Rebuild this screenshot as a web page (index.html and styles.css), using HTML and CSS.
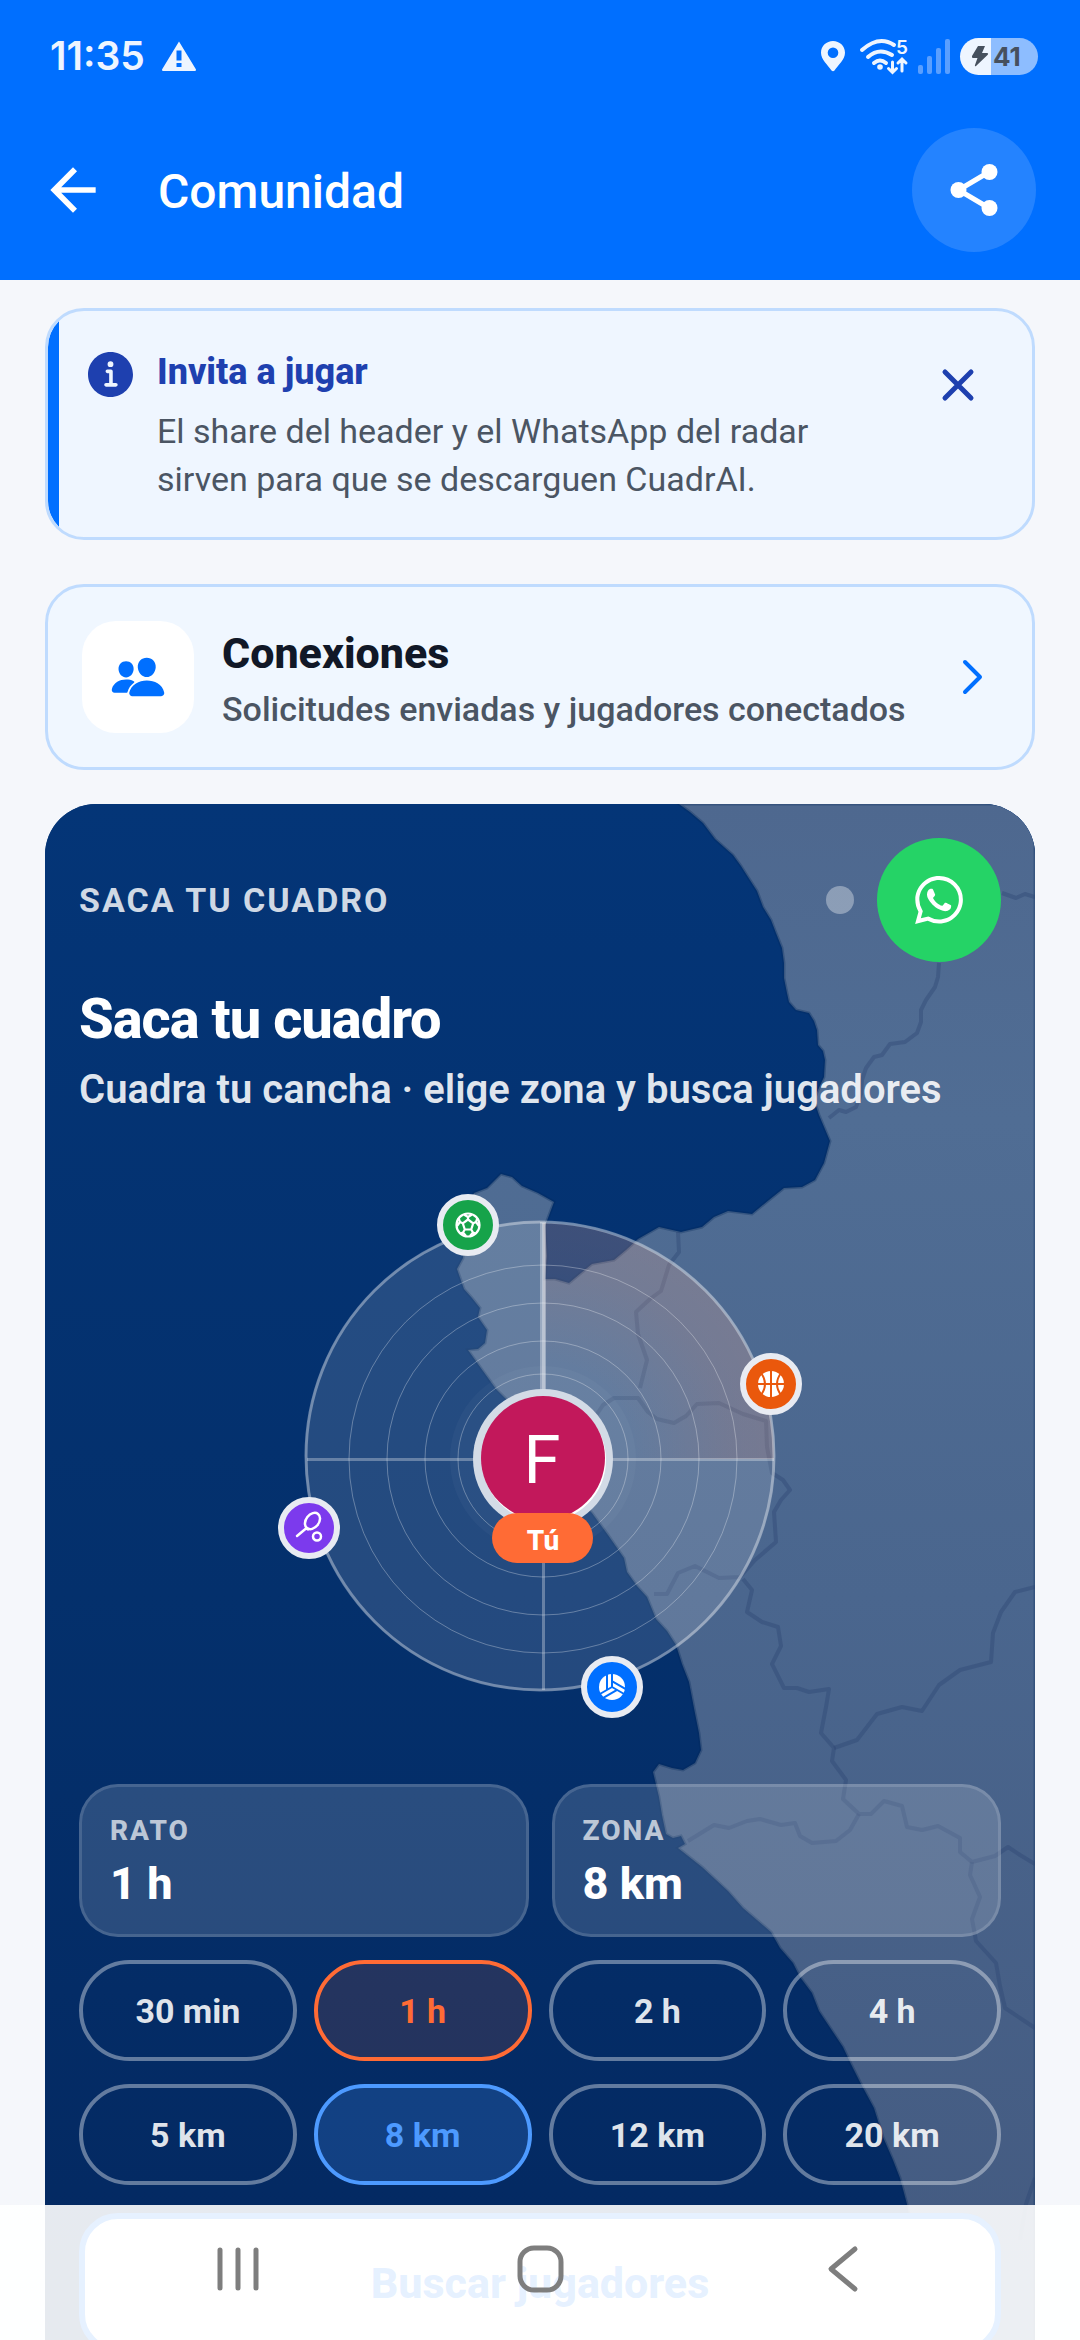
FILE: index.html
```html
<!DOCTYPE html>
<html lang="es">
<head>
<meta charset="utf-8">
<meta name="viewport" content="width=device-width, initial-scale=1">
<title>Comunidad</title>
<link rel="stylesheet" href="styles.css">
</head>
<body>
<div class="app">
  <header class="header">
    <div class="status">
      <span class="clock">11:35</span>
      <svg class="status-warning" width="36" height="32" viewBox="0 0 36 32"><path fill="#eef5ff" fill-rule="evenodd" d="M18 1.500 35 29.500Q35 31 34 31H2Q1 31 1 29.500ZM15.500 10.500V20.500H20.500V10.500ZM15.500 23V27H20.500V23Z"/></svg>
      <div class="status-right">
        <svg class="status-pin" width="24" height="32" viewBox="0 0 24 32"><path fill="#eef5ff" fill-rule="evenodd" d="M12 1C5.500 1 0 6 0 12.800 0 20 7 25 10.500 30.500Q12 32 13.500 30.500C17 25 24 20 24 12.800 24 6 18.500 1 12 1ZM12 7.500A5.300 5.300 0 1 1 12 18.100 5.300 5.300 0 0 1 12 7.500Z"/></svg>
        <svg class="status-wifi" width="48" height="36" viewBox="0 0 48 36" fill="none" stroke="#eef5ff" stroke-linecap="round">
          <path stroke-width="4" d="M2 12Q19-3 34 7M8 19Q19 9 32 17M14 25Q20 20 26 25"/>
          <circle cx="20" cy="29" r="2.800" fill="#eef5ff" stroke="none"/>
          <path stroke-width="3" d="M32.500 24V34M28.500 30.500 32.500 34.500 36.500 30.500M42 33V22M38 25 42 21 46 25"/>
          <text x="36" y="16" font-size="19" font-weight="600" fill="#eef5ff" stroke="none">5</text>
        </svg>
        <svg width="32" height="36" viewBox="0 0 32 36" fill="#5a9fff"><rect y="27" width="5" height="9" rx="2"/><rect x="9" y="18" width="5" height="18" rx="2"/><rect x="18" y="10" width="5" height="26" rx="2"/><rect x="27" y="1" width="5" height="35" rx="2"/></svg>
        <span class="battery">
          <svg width="18" height="22" viewBox="0 0 18 22"><path fill="#46505e" d="M7 1H14L11 8H16Q18 8.500 16.500 10L5 21Q3.500 22 4 20L6.500 13H2Q.500 13 1 11Z"/></svg>
          <span>41</span>
        </span>
      </div>
    </div>
    <div class="app-bar">
      <button class="back" aria-label="Volver"><svg width="68" height="68" viewBox="0 0 24 24"><path fill="#fff" d="M20 11H7.830l5.590-5.590L12 4l-8 8 8 8 1.410-1.410L7.830 13H20z"/></svg></button>
      <h1>Comunidad</h1>
      <button class="share" aria-label="Compartir"><svg width="60" height="60" viewBox="0 0 60 60" fill="#fff"><path d="M45 12 14.500 30 45 48" fill="none" stroke="#fff" stroke-width="5"/><circle cx="14.500" cy="30" r="8"/><circle cx="45.500" cy="12" r="8"/><circle cx="45.500" cy="48" r="8"/></svg></button>
    </div>
  </header>

  <main class="content">
    <section class="notice">
      <svg class="notice-icon" width="45" height="45" viewBox="56 56 400 400"><path fill="#1e40af" d="M256 56C145.720 56 56 145.720 56 256s89.720 200 200 200 200-89.720 200-200S366.280 56 256 56zm0 82a26 26 0 11-26 26 26 26 0 0126-26zm48 226h-88a16 16 0 010-32h28v-88h-16a16 16 0 010-32h32a16 16 0 0116 16v104h28a16 16 0 010 32z"/></svg>
      <div class="notice-text">
        <h2>Invita a jugar</h2>
        <p>El share del header y el WhatsApp del radar sirven para que se descarguen CuadrAI.</p>
      </div>
      <button class="close" aria-label="Cerrar"><svg width="34" height="34" viewBox="0 0 34 34"><path d="M4 4 30 30M30 4 4 30" stroke="#1e40af" stroke-width="5" stroke-linecap="round"/></svg></button>
    </section>

    <a class="connections" href="#conexiones">
      <span class="connections-icon"><svg width="56" height="56" viewBox="0 0 512 512" fill="#006fff"><path d="M336 256c-20.560 0-40.440-9.180-56-25.840-15.130-16.250-24.370-37.920-26-61-1.740-24.620 5.770-47.260 21.140-63.760S312 80 336 80c23.830 0 45.380 9.060 60.700 25.520 15.470 16.620 23 39.220 21.260 63.630-1.670 23.110-10.900 44.770-26 61C376.440 246.820 356.570 256 336 256zM467.830 432H204.180a27.710 27.710 0 01-22-10.670 30.220 30.220 0 01-5.260-25.790c8.420-33.810 29.280-61.850 60.320-81.080C264.790 297.400 299.860 288 336 288c36.850 0 71 9 98.710 26.050 31.110 19.130 52 47.330 60.380 81.550a30.270 30.270 0 01-5.320 25.780A27.680 27.680 0 01467.830 432zM147 260c-35.190 0-66.130-32.720-69-72.930-1.420-20.600 5-39.650 18-53.620 12.860-13.830 31-21.450 51-21.450s38 7.660 50.930 21.570c13.100 14.080 19.500 33.090 18 53.520-2.870 40.200-33.800 72.910-68.930 72.910zM212.660 291.450c-17.590-8.600-40.420-12.900-65.650-12.900-29.460 0-58.070 7.680-80.570 21.620-25.510 15.830-42.670 38.880-49.600 66.710a27.390 27.390 0 004.790 23.360A25.320 25.320 0 0041.720 400h111a8 8 0 007.870-6.570c.110-.630.250-1.260.410-1.880 8.480-34.060 28.350-62.840 57.710-83.820a8 8 0 00-.630-13.390c-1.570-.920-3.370-1.890-5.420-2.890z"/></svg></span>
      <span class="connections-text">
        <strong>Conexiones</strong>
        <span>Solicitudes enviadas y jugadores conectados</span>
      </span>
      <svg class="chevron" width="24" height="38" viewBox="0 0 24 38"><path d="M4 4 19 19 4 34" fill="none" stroke="#006fff" stroke-width="4" stroke-linecap="round" stroke-linejoin="round"/></svg>
    </a>

    <section class="finder">
      <svg class="map" viewBox="45 804 990 1583" aria-hidden="true">
        <defs>
          <linearGradient id="sea" x1="0" y1="0" x2="0" y2="1"><stop offset="0" stop-color="#043577"/><stop offset=".5" stop-color="#04306c"/><stop offset="1" stop-color="#042860"/></linearGradient>
          <linearGradient id="land" x1="0" y1="0" x2="0" y2="1"><stop offset="0" stop-color="#4e688f"/><stop offset=".2" stop-color="#506d94"/><stop offset=".5" stop-color="#4a668e"/><stop offset="1" stop-color="#43597f"/></linearGradient>
        </defs>
        <rect x="45" y="804" width="990" height="1583" fill="url(#sea)"/>
        <path class="coast" fill="url(#land)" d="M679 804 690 812 703 823 715 839 733 855 741 866 748 877 757 891 763 907 771 920 776 933 782 948 784 963 784 978 787 993 789 1002 796 1010 809 1013 814 1021 817 1030 818 1045 823 1051 825 1060 824 1077 818 1090 814 1100 819 1115 830 1141 824 1163 815 1180 802 1187 784 1188 769 1200 752 1214 728 1211 714 1217 702 1227 681 1232 659 1227 638 1239 626 1250 614 1260 592 1264 581 1273 569 1283 555 1279 545 1279 547 1256 545 1226 554 1202 538 1193 522 1186 512 1177 501 1174 487 1188 474 1193 466 1215 463 1258 457 1269 464 1289 472 1298 480 1308 478 1317 487 1330 485 1343 478 1349 468 1350 483 1371 496 1389 506 1399 530 1440 560 1480 592 1513 608 1535 624 1558 627 1572 637 1586 647 1597 656 1619 667 1631 676 1645 682 1664 689 1682 694 1708 699 1733 701 1750 695 1763 683 1770 672 1768 659 1764 653 1772 659 1797 662 1815 666 1834 673 1838 681 1836 685 1844 678 1848 702 1867 728 1891 743 1908 757 1920 771 1932 780 1948 793 1963 800 1977 812 1993 819 2011 829 2026 843 2047 851 2064 860 2082 867 2095 874 2108 883 2137 893 2160 900 2178 907 2204 912 2230 930 2387H1035V804Z"/>
        <g class="frontiers">
          <path d="M1002 893 1016 898 1025 894 1035 897M939 963 938 977 935 987 926 1000 921 1010 921 1022 917 1033 905 1042 890 1044 882 1055 874 1057 866 1068 862 1080 861 1094 856 1107 846 1112 839 1110 829 1118"/>
          <path d="M678 1232 679 1252 669 1265 661 1291 650 1299 636 1312 638 1334 647 1360 640 1388M595 1417 603 1405 614 1398 638 1398 648 1412 657 1419 674 1423 686 1416 697 1404 719 1403 743 1414 766 1421 767 1447 772 1473 783 1480 790 1490 781 1500 774 1512 776 1542 755 1560 740 1577 719 1578 695 1566 678 1573 667 1594 654 1594"/>
          <path d="M743 1579 752 1590 747 1612 762 1622 778 1627 781 1646 772 1664 784 1688 797 1688 809 1692 829 1689 826 1707 821 1733 834 1748 832 1761 846 1780 843 1799 859 1814 871 1814 884 1801 902 1806 907 1827 922 1830 938 1826 960 1838 960 1852 972 1862 995 1856 1008 1847 1020 1855 1035 1864"/>
          <path d="M834 1748 857 1740 877 1714 902 1707 922 1711 939 1685 960 1670 991 1662 993 1633 1001 1612 1015 1592 1035 1587M972 1862 970 1875 980 1897 972 1919 976 1941 996 1963 1000 1986 1005 2008 1035 2028M859 1814 850 1830 836 1841 812 1843 800 1836 795 1823 781 1825 760 1819 747 1821 729 1828 714 1825 688 1841M1035 2178 1026 2204 1020 2240"/>
        </g>
      </svg>

      <div class="finder-top">
        <span class="eyebrow">SACA TU CUADRO</span>
        <span class="dot"></span>
        <button class="whatsapp" aria-label="WhatsApp"><svg width="48" height="48" viewBox="0 0 24 24"><path fill="#fff" d="M17.472 14.382c-.297-.149-1.758-.867-2.030-.967-.273-.099-.471-.148-.670.150-.197.297-.767.966-.940 1.164-.173.199-.347.223-.644.075-.297-.150-1.255-.463-2.390-1.475-.883-.788-1.480-1.761-1.653-2.059-.173-.297-.018-.458.130-.606.134-.133.298-.347.446-.520.149-.174.198-.298.298-.497.099-.198.050-.371-.025-.520-.075-.149-.669-1.612-.916-2.207-.242-.579-.487-.500-.669-.510-.173-.008-.371-.010-.570-.010-.198 0-.520.074-.792.372-.272.297-1.040 1.016-1.040 2.479 0 1.462 1.065 2.875 1.213 3.074.149.198 2.096 3.200 5.077 4.487.709.306 1.262.489 1.694.625.712.227 1.360.195 1.871.118.571-.085 1.758-.719 2.006-1.413.248-.694.248-1.289.173-1.413-.074-.124-.272-.198-.570-.347m-5.421 7.403h-.004a9.870 9.870 0 01-5.031-1.378l-.361-.214-3.741.982.998-3.648-.235-.374a9.860 9.860 0 01-1.510-5.260c.001-5.450 4.436-9.884 9.888-9.884 2.640 0 5.122 1.030 6.988 2.898a9.825 9.825 0 012.893 6.994c-.003 5.450-4.437 9.884-9.885 9.884m8.413-18.297A11.815 11.815 0 0012.050 0C5.495 0 .160 5.335.157 11.892c0 2.096.547 4.142 1.588 5.945L.057 24l6.305-1.654a11.882 11.882 0 005.683 1.448h.005c6.554 0 11.890-5.335 11.893-11.893a11.821 11.821 0 00-3.480-8.413z"/></svg></button>
      </div>
      <h2 class="finder-title">Saca tu cuadro</h2>
      <p class="finder-subtitle">Cuadra tu cancha · elige zona y busca jugadores</p>

      <svg class="radar" width="560" height="560" viewBox="0 0 560 560">
        <defs>
          <radialGradient id="sweep" gradientUnits="userSpaceOnUse" cx="280" cy="280" r="235"><stop offset=".4" stop-color="#ff6b35" stop-opacity="0"/><stop offset=".8" stop-color="#ff6b35" stop-opacity=".1"/><stop offset="1" stop-color="#ff6b35" stop-opacity=".12"/></radialGradient>
        </defs>
        <circle cx="280" cy="280" r="235" fill="#fff" fill-opacity=".13"/>
        <path d="M283 283V47A234 234 0 0 1 514 283Z" fill="url(#sweep)"/>
        <circle cx="280" cy="280" r="234" fill="none" stroke="#fff" stroke-opacity=".36" stroke-width="3"/>
        <g fill="none" stroke="#fff" stroke-opacity=".3">
          <circle cx="283" cy="283" r="194"/><circle cx="283" cy="283" r="156"/><circle cx="283" cy="283" r="118"/><circle cx="283" cy="283" r="85"/>
          <path stroke-width="3" d="M47 283.500H514M283.500 47V514"/>
        </g>
        <path stroke="#fff" stroke-opacity=".35" stroke-width="6" d="M283 46V283"/>
        <circle cx="283" cy="283" r="93" fill="#fff" fill-opacity=".03"/>
        <circle cx="283" cy="283" r="70" fill="#d3dbe6"/>
        <circle cx="284" cy="284" r="62" fill="#fff"/>
        <circle cx="283" cy="282" r="62" fill="#c2185b"/>
        <text class="initial" x="282" y="307" text-anchor="middle">F</text>
        <rect x="232" y="337" width="101" height="50" rx="25" fill="#ff6b35"/>
        <text class="you" x="283" y="374" text-anchor="middle">Tú</text>

        <g transform="translate(208 49)">
          <circle class="node" r="28" fill="#16a34a"/>
          <g fill="none" stroke="#fff" stroke-width="2.200" stroke-linejoin="round">
            <circle r="11.500"/>
            <path d="M0-5.500 5.200-1.700 3.200 4.500H-3.200L-5.200-1.700ZM0-5.500V-8M5.200-1.700 8-3M3.200 4.500 5 7.500M-3.200 4.500-5 7.500M-5.200-1.700-8-3M-4-10.500 0-8 4-10.500M11 1 8-3 9.500-7M-11 1-8-3-9.500-7M7.500 8.500 5 7.500 2 11M-7.500 8.500-5 7.500-2 11"/>
          </g>
        </g>
        <g transform="translate(511 208)">
          <circle class="node" r="28" fill="#ea580c"/>
          <circle r="13" fill="#fff"/>
          <path fill="none" stroke="#ea580c" stroke-width="2" d="M0-14V14M-14 0H14M-10-11Q-2 0-10 11M10-11Q2 0 10 11"/>
        </g>
        <g transform="translate(49 352)">
          <circle class="node" r="28" fill="#7c3aed"/>
          <g fill="none" stroke="#fff" stroke-width="2.500" stroke-linecap="round">
            <ellipse cx="3.500" cy="-7" rx="6.500" ry="9" transform="rotate(38 3.500 -7)"/>
            <path d="M-3 .500-12 8M-3 .500-1 1.500"/><circle cx="8" cy="8.500" r="4"/>
          </g>
        </g>
        <g transform="translate(352 511)">
          <circle class="node" r="28" fill="#006fff"/>
          <circle r="13" fill="#fff"/>
          <g fill="none" stroke="#006fff" stroke-width="2">
            <path d="M0 0V-14M-5-14V3"/><path d="M0 0V-14M-5-14V3" transform="rotate(120)"/><path d="M0 0V-14M-5-14V3" transform="rotate(240)"/>
          </g>
        </g>
      </svg>

      <div class="metrics">
        <div class="metric"><span>RATO</span><strong>1 h</strong></div>
        <div class="metric"><span>ZONA</span><strong>8 km</strong></div>
      </div>
      <div class="chips">
        <button class="chip">30 min</button>
        <button class="chip chip-time" aria-pressed="true">1 h</button>
        <button class="chip">2 h</button>
        <button class="chip">4 h</button>
        <button class="chip">5 km</button>
        <button class="chip chip-zone" aria-pressed="true">8 km</button>
        <button class="chip">12 km</button>
        <button class="chip">20 km</button>
      </div>
      <button class="search">Buscar jugadores</button>
    </section>
  </main>

  <nav class="system-nav">
    <button aria-label="Recientes"><svg width="44" height="48" viewBox="0 0 44 48"><path d="M4 5V43M22 5V43M40 5V43"/></svg></button>
    <button aria-label="Inicio"><svg width="48" height="48" viewBox="0 0 48 48"><rect x="4" y="3" width="41" height="42" rx="14"/></svg></button>
    <button aria-label="Atrás"><svg width="44" height="48" viewBox="0 0 44 48"><path d="M35 4 11 24 35 44"/></svg></button>
  </nav>
</div>
</body>
</html>
```
FILE: styles.css
```css
* {
  box-sizing: border-box;
}

body {
  margin: 0;
  background: #f5f7fb;
  font-family: Roboto, "Noto Sans", sans-serif;
  color: #111827;
}

h1,
h2,
p {
  margin: 0;
}

button {
  display: flex;
  align-items: center;
  justify-content: center;
  padding: 0;
  border: 0;
  background: none;
  font: inherit;
}

svg {
  display: block;
  flex: none;
}

.app {
  display: flex;
  flex-direction: column;
  height: 100vh;
}

/* Header */

.header {
  flex: none;
  padding-bottom: 28px;
  background: #006fff;
  color: #fff;
}

.status {
  display: flex;
  align-items: center;
  height: 112px;
  padding: 0 42px 0 50px;
  color: #eef5ff;
  font-family: Inter, Roboto, sans-serif;
}

.clock {
  font-size: 39px;
  font-weight: 600;
  line-height: 48px;
}

.status-warning {
  margin-left: 16px;
}

.status-right {
  display: flex;
  align-items: center;
  gap: 10px;
  margin-left: auto;
}

.status-pin {
  margin-right: 5px;
}

.status-wifi {
  overflow: visible;
}

.battery {
  display: flex;
  align-items: center;
  gap: 4px;
  width: 78px;
  height: 37px;
  padding-left: 11px;
  border-radius: 19px;
  background: linear-gradient(90deg, #eef5ff 31px, #8dbdff 31px);
  color: #46505e;
  font-size: 26px;
  font-weight: 700;
}

.app-bar {
  display: flex;
  align-items: center;
  padding: 16px 44px 0 39px;
}

.app-bar h1 {
  margin-left: 51px;
  padding-top: 4px;
  font-size: 48px;
  font-weight: 500;
  line-height: 56px;
}

.share {
  width: 124px;
  height: 124px;
  margin-left: auto;
  border-radius: 50%;
  background: rgba(255, 255, 255, 0.14);
}

/* Content */

.content {
  flex: 1;
  min-height: 0;
  padding: 28px 45px 0;
  overflow-y: auto;
  scrollbar-width: none;
}

.notice {
  display: flex;
  align-items: flex-start;
  gap: 24px;
  padding: 34px 34px 34px 40px;
  border: 3px solid #bfdbfe;
  border-radius: 39px;
  background: linear-gradient(90deg, #006fff 11px, #eff6ff 11px) padding-box;
}

.notice-icon {
  margin-top: 7px;
}

.notice-text {
  flex: 1;
}

.notice-text h2 {
  margin-bottom: 8px;
  color: #1e40af;
  font-size: 36px;
  font-weight: 800;
  line-height: 54px;
}

.notice-text p {
  color: #4b5563;
  font-size: 34px;
  line-height: 48px;
}

.close {
  width: 80px;
  height: 80px;
}

.connections {
  display: flex;
  align-items: center;
  margin: 44px 0 34px;
  padding: 34px 47px 34px 34px;
  border: 3px solid #bfdbfe;
  border-radius: 39px;
  background: #f0f7ff;
  color: inherit;
  text-decoration: none;
}

.connections-icon {
  display: grid;
  place-items: center;
  width: 112px;
  height: 112px;
  border-radius: 34px;
  background: #fff;
}

.connections-text {
  display: flex;
  flex-direction: column;
  flex: 1;
  gap: 4px;
  margin-left: 28px;
  padding-top: 4px;
  color: #4b5563;
  font-size: 34px;
  font-weight: 500;
  line-height: 48px;
}

.connections-text strong {
  color: #111827;
  font-size: 43px;
  font-weight: 800;
  line-height: 56px;
}

/* Player finder */

.finder {
  position: relative;
  padding: 34px;
  border-radius: 51px;
  background: #04306c;
  color: #fff;
  overflow: hidden;
}

.finder > * {
  position: relative;
}

.finder > .map {
  position: absolute;
  top: 0;
  left: 0;
  width: 100%;
}

.coast {
  stroke: #04275a;
  stroke-opacity: 0.3;
  stroke-width: 3;
}

.frontiers {
  fill: none;
  stroke: #2c4672;
  stroke-opacity: 0.4;
  stroke-width: 4;
  stroke-linejoin: round;
}

.finder-top {
  display: flex;
  align-items: center;
}

.eyebrow {
  color: rgba(255, 255, 255, 0.82);
  font-size: 34px;
  font-weight: 700;
  letter-spacing: 2px;
  line-height: 48px;
}

.dot {
  width: 28px;
  height: 28px;
  margin: 0 23px 0 auto;
  border-radius: 50%;
  background: rgba(255, 255, 255, 0.35);
}

.whatsapp {
  width: 124px;
  height: 124px;
  border-radius: 50%;
  background: #25d366;
}

.finder-title {
  margin-top: 23px;
  font-size: 56px;
  font-weight: 800;
  letter-spacing: -1px;
  line-height: 68px;
}

.finder-subtitle {
  margin-top: 10px;
  color: rgba(255, 255, 255, 0.88);
  font-size: 40px;
  font-weight: 600;
  line-height: 54px;
}

.radar {
  margin: 59px auto 48px;
}

.initial {
  fill: #fff;
  font-size: 67px;
}

.you {
  fill: #fff;
  font-size: 28px;
  font-weight: 800;
}

.node {
  stroke: #e8ebf2;
  stroke-width: 6;
}

.metrics {
  display: grid;
  grid-template-columns: 1fr 1fr;
  gap: 23px;
}

.metric {
  display: flex;
  flex-direction: column;
  gap: 8px;
  padding: 27px 28px 22px;
  border: 3px solid rgba(255, 255, 255, 0.14);
  border-radius: 39px;
  background: rgba(255, 255, 255, 0.15);
}

.metric span {
  color: rgba(255, 255, 255, 0.7);
  font-size: 28px;
  font-weight: 800;
  letter-spacing: 2px;
  line-height: 34px;
}

.metric strong {
  font-size: 45px;
  font-weight: 800;
  line-height: 56px;
}

.chips {
  display: grid;
  grid-template-columns: repeat(4, 1fr);
  gap: 23px 17px;
  margin-top: 23px;
}

.chip {
  height: 101px;
  border: 4px solid rgba(255, 255, 255, 0.38);
  border-radius: 51px;
  color: rgba(255, 255, 255, 0.88);
  font-size: 34px;
  font-weight: 700;
}

.chip-time {
  border-color: #ff6b35;
  background: rgba(255, 107, 53, 0.13);
  color: #ff6b35;
}

.chip-zone {
  border-color: #4d9aff;
  background: rgba(77, 154, 255, 0.2);
  color: #4d9aff;
}

.search {
  width: 100%;
  height: 140px;
  margin-top: 28px;
  border: 6px solid #006fff;
  border-radius: 39px;
  background: #fff;
  color: #006fff;
  font-size: 43px;
  font-weight: 800;
}

/* System navigation */

.system-nav {
  position: fixed;
  right: 0;
  bottom: 0;
  left: 0;
  display: flex;
  justify-content: center;
  gap: 60px;
  height: 135px;
  background: rgba(255, 255, 255, 0.9);
}

.system-nav button {
  width: 242px;
  height: 128px;
}

.system-nav svg {
  fill: none;
  stroke: #7e7e7e;
  stroke-width: 5;
  stroke-linecap: round;
  stroke-linejoin: round;
}
```
